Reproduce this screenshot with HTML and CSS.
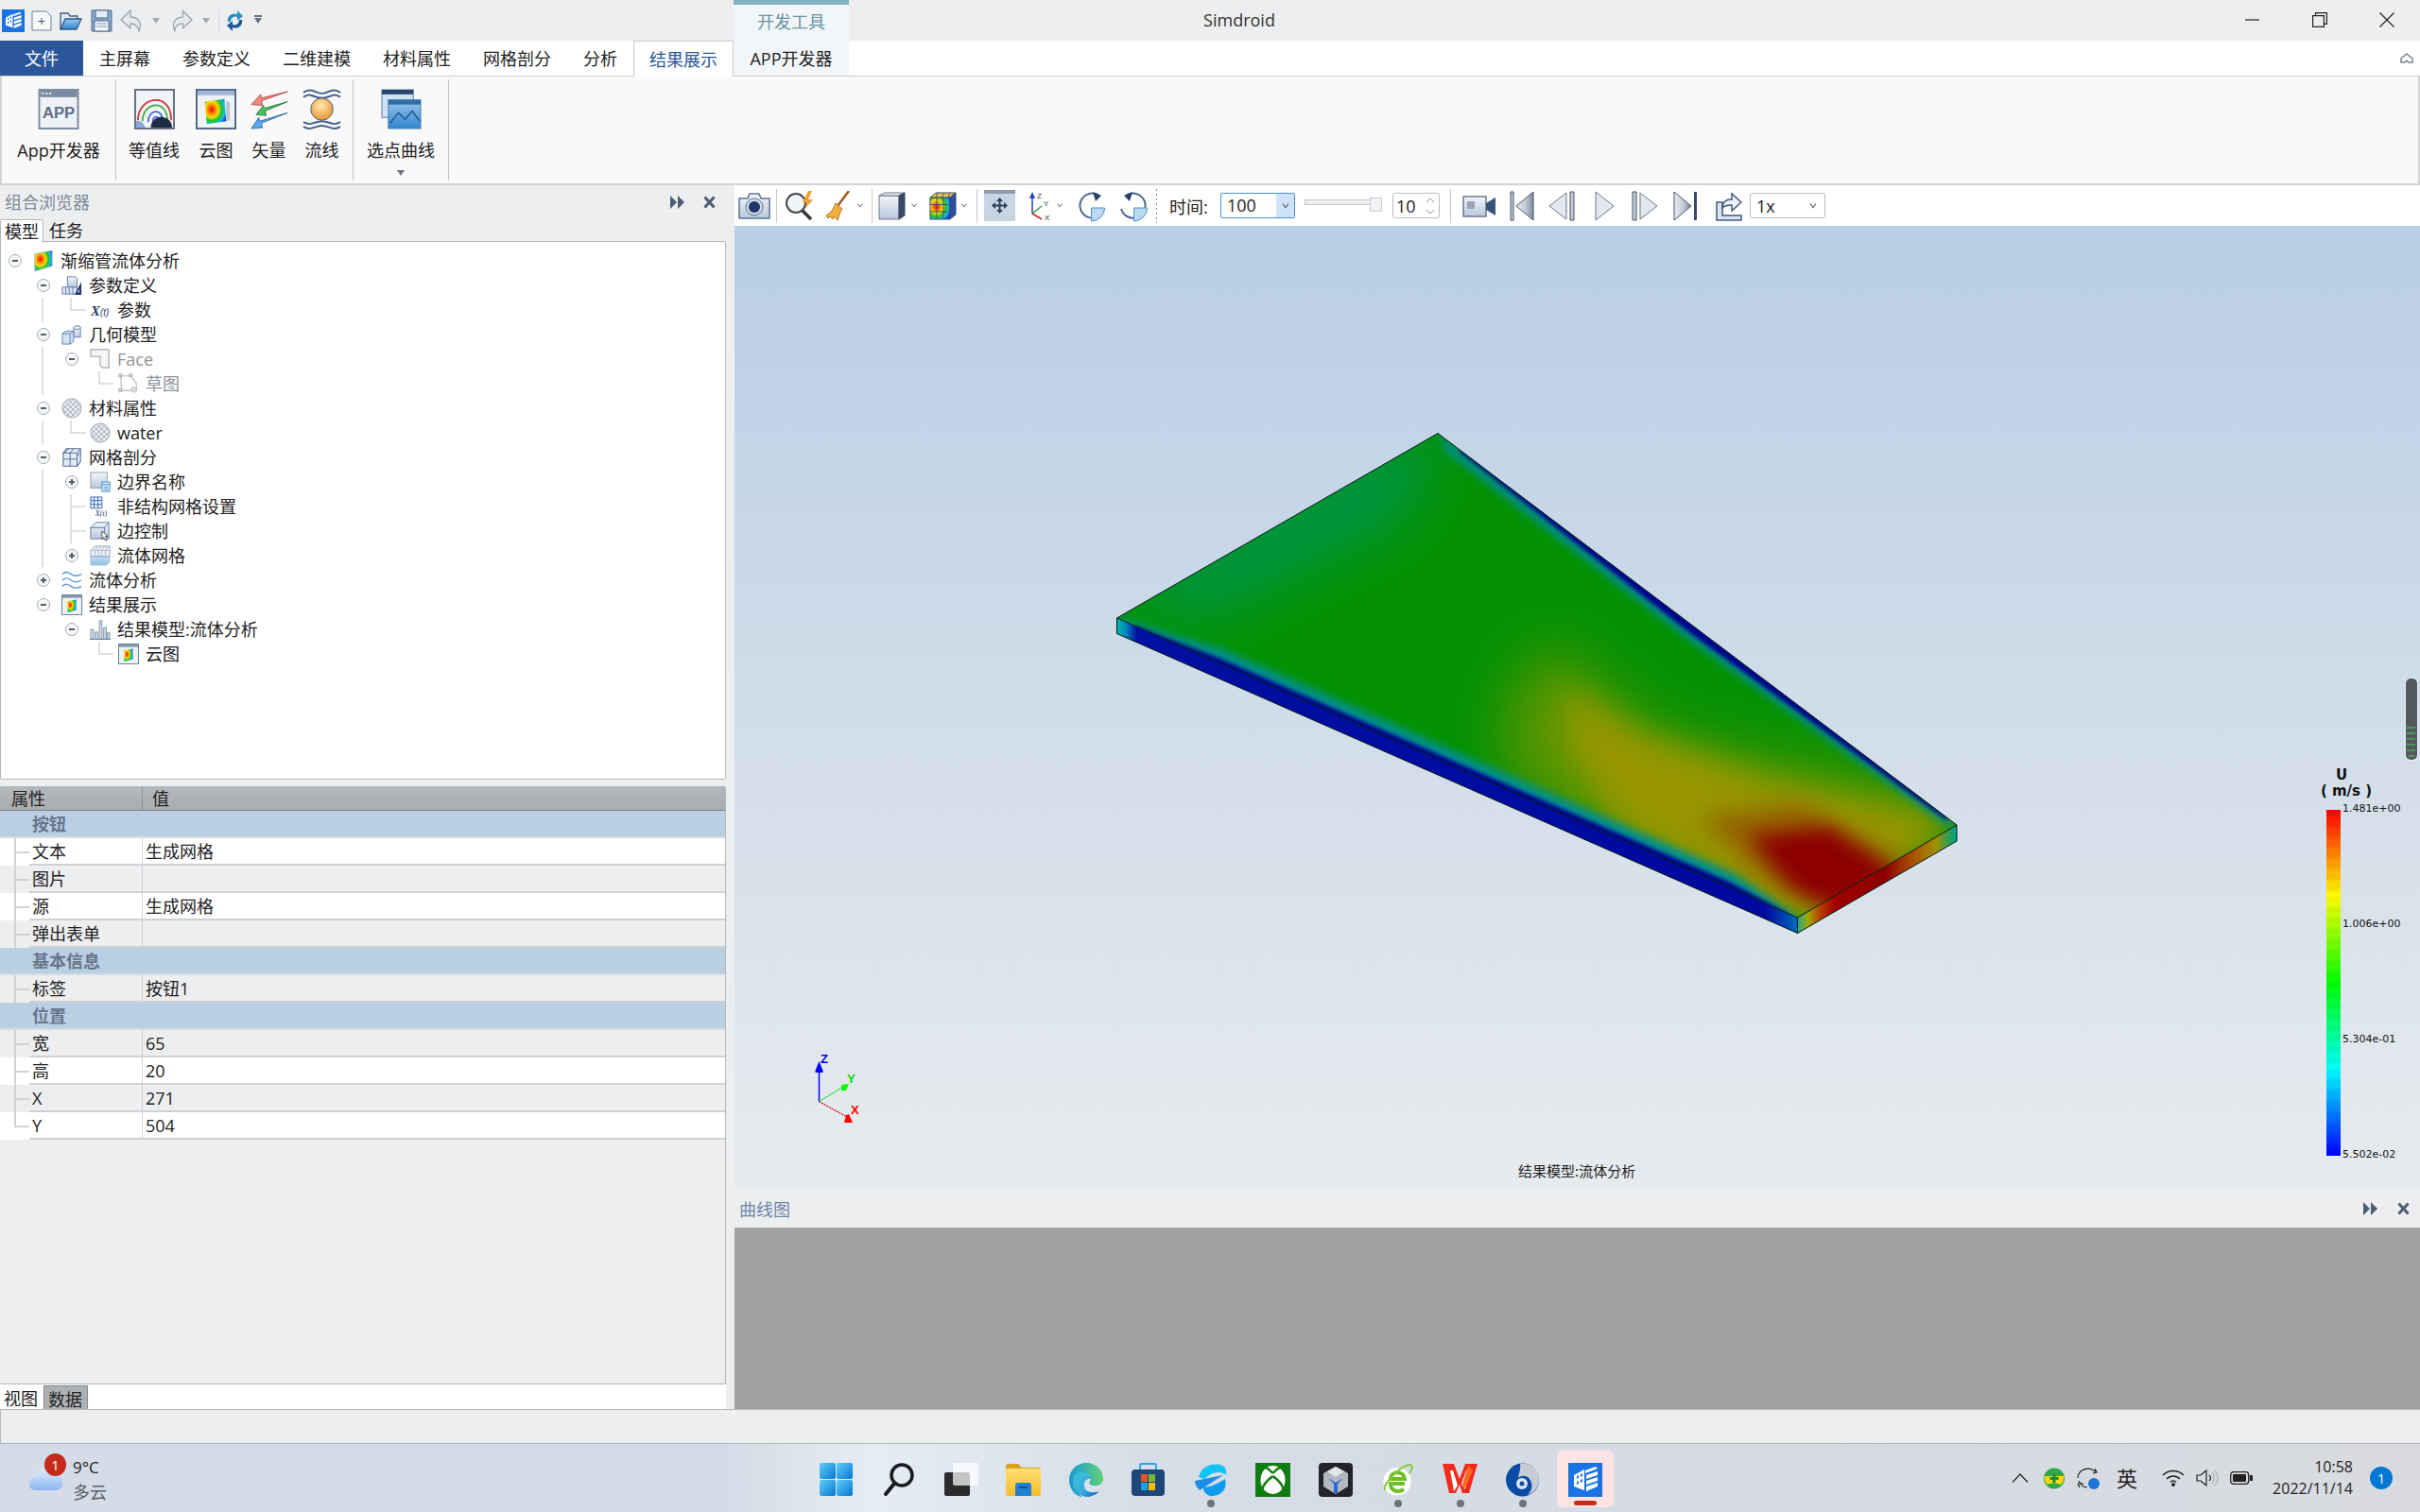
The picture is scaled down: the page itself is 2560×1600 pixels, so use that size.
FILE: index.html
```html
<!DOCTYPE html>
<html lang="zh-CN">
<head>
<meta charset="utf-8">
<title>Simdroid</title>
<link rel="stylesheet" href="styles.css">
</head>
<body>
<svg class="defs" width="0" height="0" aria-hidden="true">
  <defs>
    <radialGradient id="rb" cx=".32" cy=".42" r=".75"><stop offset="0" stop-color="#e01010"/><stop offset=".22" stop-color="#ff7a00"/><stop offset=".42" stop-color="#f2e000"/><stop offset=".62" stop-color="#20c030"/><stop offset=".82" stop-color="#10c0e0"/><stop offset="1" stop-color="#1040e0"/></radialGradient>
    <linearGradient id="gv" x1="0" y1="0" x2="0" y2="1"><stop offset="0" stop-color="#f2f5f9"/><stop offset="1" stop-color="#b9c8dc"/></linearGradient>
    <linearGradient id="gm" x1="0" y1="0" x2="1" y2="0"><stop offset="0" stop-color="#e8ecf2"/><stop offset=".55" stop-color="#c3cad4"/><stop offset="1" stop-color="#7f8a99"/></linearGradient>
    <linearGradient id="gb" x1="0" y1="0" x2="0" y2="1"><stop offset="0" stop-color="#9cc8ee"/><stop offset="1" stop-color="#2e86cf"/></linearGradient>
    <linearGradient id="gw" x1="0" y1="0" x2="1" y2="1"><stop offset="0" stop-color="#5ed0fa"/><stop offset="1" stop-color="#0676d0"/></linearGradient>
    <radialGradient id="gs" cx=".45" cy=".35" r=".7"><stop offset="0" stop-color="#ffe9b0"/><stop offset="1" stop-color="#e8902a"/></radialGradient>
    <linearGradient id="ge" x1="0" y1="0" x2="1" y2="1"><stop offset="0" stop-color="#38c6d8"/><stop offset=".6" stop-color="#3aa8e0"/><stop offset="1" stop-color="#0c5ab0"/></linearGradient>
    <linearGradient id="ge2" x1="0" y1="0" x2="1" y2="0"><stop offset="0" stop-color="#1a9ad0"/><stop offset="1" stop-color="#62d07a"/></linearGradient>
    <linearGradient id="gc" x1="0" y1="0" x2="0" y2="1"><stop offset="0" stop-color="#e0ecfb"/><stop offset="1" stop-color="#8db6ef"/></linearGradient>
    <linearGradient id="gf" x1="0" y1="0" x2="0" y2="1"><stop offset="0" stop-color="#ffdf70"/><stop offset="1" stop-color="#f6bd2c"/></linearGradient>
    <pattern id="chk" width="6" height="6" patternUnits="userSpaceOnUse"><rect width="6" height="6" fill="#f0f2f5"/><rect width="3" height="3" fill="#b4bbc6"/><rect x="3" y="3" width="3" height="3" fill="#b4bbc6"/></pattern>

    <symbol id="logo" viewBox="0 0 36 36"><rect width="36" height="36" fill="#1973e3"/><path d="M6 13 17 7v22L6 25z" fill="#fff"/><path d="M9 14l2-1v3l-2 1zM13 12l2-1v3l-2 1zM9 20l2-1v3l-2 1zM13 18l2-1v3l-2 1z" fill="#1973e3"/><path d="M18 8 29 4l2 2-13 5zM19 13l12-4v4l-12 4zM19 19l12-4v4l-12 4zM19 25l12-4v4l-12 5z" fill="#fff"/></symbol>
    <symbol id="v" viewBox="0 0 6 5"><path d="M.5.5 3 4 5.500.5" fill="none" stroke="#5b6b80"/></symbol>

    <symbol id="t-root" viewBox="0 0 24 24"><path d="M2 4 22 0v18L2 24z" fill="url(#rb)" stroke="#a8bbd0"/></symbol>
    <symbol id="t-param" viewBox="0 0 24 24"><path d="M7 2h9l2 2v10H7z" fill="url(#gv)" stroke="#5a7aa8"/><path d="M1 14h17v8H1z" fill="#dbe6f3" stroke="#5a7aa8"/><path d="M5 14v8M9 14v8M13 14v8" stroke="#5a7aa8"/><path d="M23 8v15h-8z" fill="#1f3a70"/><path d="M20.500 16v4h-2z" fill="#fff"/></symbol>
    <symbol id="t-geo" viewBox="0 0 24 24"><path d="M14 4v11h8V4z" fill="url(#gv)" stroke="#5a7aa8"/><ellipse cx="18" cy="4" rx="4" ry="2" fill="#eef3f9" stroke="#5a7aa8"/><path d="M1 11 5 8h9v12l-4 3H1z" fill="#d4e2f3" stroke="#5a7aa8"/><path d="M1 11h9v12M10 11l4-3" fill="none" stroke="#5a7aa8"/></symbol>
    <symbol id="t-face" viewBox="0 0 24 24"><path d="M1 1h21v21h-7l-3-3V9H1z" fill="#f6f6f6" stroke="#a8a8a8" stroke-width="1.300"/></symbol>
    <symbol id="t-sketch" viewBox="0 0 24 24"><path d="M3 3h12l6 9v8H4z" fill="none" stroke="#bbb" stroke-width="1.300"/><g fill="#ddd" stroke="#aaa"><rect x="1" y="1" width="3" height="3"/><rect x="13" y="1" width="3" height="3"/><rect x="1" y="18" width="3" height="3"/></g><circle cx="18" cy="19" r="3" fill="#ddd" stroke="#aaa" stroke-dasharray="1.500 1"/></symbol>
    <symbol id="t-mat" viewBox="0 0 24 24"><circle cx="12" cy="12" r="11" fill="url(#chk)" stroke="#9aa6b6"/></symbol>
    <symbol id="t-mesh" viewBox="0 0 24 24"><path d="M2 7 6 2h16v15l-4 5H2z" fill="#e4ebf4" stroke="#4d6a92" stroke-width="1.100"/><path d="M2 7h16v15M18 7l4-5M2 14h16M10 7v15M8 2 4 7M14 2l-4 5M18 11l4-5" fill="none" stroke="#4d6a92"/></symbol>
    <symbol id="t-bound" viewBox="0 0 24 24"><rect x="1" y="1" width="19" height="18" fill="url(#gv)" stroke="#8b9bb0"/><rect x="14" y="12" width="9" height="11" fill="#dceaf8" stroke="#3f8ac8"/><path d="M14 15h9M16 18h5M16 20.500h5" stroke="#3f8ac8"/></symbol>
    <symbol id="t-grid" viewBox="0 0 24 24"><path d="M1 1h13v13H1zM5 1v13M9.500 1v13M1 5h13M1 9.500h13" fill="#e6eefb" stroke="#3a66b0"/><text x="6" y="23" class="xt-s">X(t)</text></symbol>
    <symbol id="t-edge" viewBox="0 0 24 24"><path d="M1 8l6-6h15v19H1z" fill="url(#gv)" stroke="#5a7aa8"/><path d="M1 8h16v13M17 8l5-6" fill="none" stroke="#5a7aa8"/><path d="M14 12v9l2-2 2 4 2-1-2-4h3z" fill="#fff" stroke="#444"/></symbol>
    <symbol id="t-fmesh" viewBox="0 0 24 24"><path d="M6 1h17v12H1V6z" fill="#eef2f8" stroke="#8aa0be"/><path d="M9 1 6 6M13 1l-3 5M17 1l-3 5M21 1l-3 5M1 6h22M6 6v7M10 6v7M14 6v7M18 6v7" stroke="#a8b8cc" fill="none"/><path d="M1 13h22v6l-4 4H1z" fill="url(#gb)" opacity=".55" stroke="#6e8cb4"/></symbol>
    <symbol id="t-wave" viewBox="0 0 24 24"><path d="M1 5c4-4 7-2 10 0s7 3 12 0M1 12c4-4 7-2 10 0s7 3 12 0M1 19c4-4 7-2 10 0s7 3 12 0" fill="none" stroke="#5d9ad6" stroke-width="1.500"/></symbol>
    <symbol id="t-result" viewBox="0 0 24 24"><rect x=".5" y=".5" width="23" height="23" fill="#eef1f5" stroke="#66788f"/><path d="M1 1h22v3H1z" fill="#8898ad"/><path d="M7 8l10-2v12l-10 3z" fill="url(#rb)"/></symbol>
    <symbol id="t-chart" viewBox="0 0 24 24"><path d="M1 23V12h3v11zM6 23V15h3v8zM11 23V2h3v21zM16 23V10h3v13zM20 23V16h3v7z" fill="#d6e0ec" stroke="#7c8da3"/><path d="M0 23.500h24" stroke="#5a7aa8"/></symbol>

    <symbol id="r-app" viewBox="0 0 44 44"><rect x="1" y="1" width="42" height="42" fill="#eef1f5" stroke="#7a8aa0" stroke-width="2"/><rect x="2" y="2" width="40" height="7" fill="#7a8aa0"/><path d="M4 5h2M8 5h2M12 5h2" stroke="#fff" stroke-width="2"/><text x="22" y="32" class="app-t">APP</text></symbol>
    <symbol id="r-contour" viewBox="0 0 44 44"><rect x="1" y="1" width="42" height="42" fill="#f0f3f7" stroke="#66707e" stroke-width="2"/><g fill="none" stroke-width="1.800"><path d="M4 34C4 8 40 2 40 34" stroke="#d83030"/><path d="M9 35C9 14 36 10 36 35" stroke="#3db040"/><path d="M15 36c0-14 16-16 16 0" stroke="#3a6fd0"/><path d="M20 37c0-8 7-10 7 0" stroke="#5a5ad8"/></g><path d="M18 42c0-8 8-13 14-11 5 1 9 5 9 11z" fill="#1f2b46"/><path d="M2 35c4-2 8 2 10 7H2z" fill="#8aa8da"/></symbol>
    <symbol id="r-cloud" viewBox="0 0 44 44"><rect x="1" y="1" width="42" height="42" fill="#eef1f5" stroke="#506786" stroke-width="2"/><rect x="2" y="2" width="40" height="5" fill="#9fb7d4"/><path d="M10 14 31 11 33 35 12 38z" fill="url(#rb)"/><path d="M33 13 37 15 37 34 33 35z" fill="#bcc3cc"/></symbol>
    <symbol id="r-vector" viewBox="0 0 44 44"><path d="M42 3 14 13l1 5-12-1 10-11 1 4z" fill="#f08a80" stroke="#b03838" stroke-width=".8"/><path d="M42 14 18 24l1 5-11-1 8-10 1 3z" fill="#48c060" stroke="#20663a" stroke-width=".8"/><path d="M42 26 14 37l1 5-12 1 8-12 1 4z" fill="#5ea8ee" stroke="#1c5a9c" stroke-width=".8"/></symbol>
    <symbol id="r-stream" viewBox="0 0 44 44"><g fill="none" stroke="#44608c" stroke-width="2"><path d="M2 4c8-6 14 1 20 1s12-7 20-1"/><path d="M2 9c8-6 10 1 20 1s12-7 20-1"/><path d="M2 36c8 5 12-1 20-1s12 6 20 1"/><path d="M2 41c8 5 12-1 20-1s12 6 20 1"/></g><ellipse cx="22" cy="22" rx="12" ry="12" fill="url(#gs)" stroke="#4c5f7c"/></symbol>
    <symbol id="r-pick" viewBox="0 0 44 44"><rect x="1" y="1" width="34" height="30" fill="#cfe3f5" stroke="#5a7aa0"/><rect x="1" y="1" width="34" height="5" fill="#2b4470"/><rect x="8" y="12" width="35" height="31" fill="url(#gb)" stroke="#4a7cb0"/><rect x="8" y="12" width="35" height="5" fill="#2f6ea6"/><path d="M10 37l9-11 7 7 8-9 8 11" fill="none" stroke="#1f5790" stroke-width="1.500"/></symbol>

    <symbol id="b-cam" viewBox="0 0 34 29"><path d="M1 7h9l2-5h10l2 5h9v21H1z" fill="url(#gv)" stroke="#5d7494" stroke-width="1.500"/><circle cx="17" cy="16" r="9" fill="#cbd8e8" stroke="#5d7494"/><circle cx="17" cy="16" r="6" fill="#1f3468"/></symbol>
    <symbol id="b-mag" viewBox="0 0 35 32"><circle cx="13" cy="13" r="10" fill="#f1f4f7" stroke="#44494f" stroke-width="2"/><path d="M20 21l9 9" stroke="#33383f" stroke-width="3.500"/><path d="M26 0 20 12h5l-3 8 9-11h-5l4-9z" fill="#f0a030"/></symbol>
    <symbol id="b-broom" viewBox="0 0 26 32"><path d="M25 0 13 16" stroke="#9a5a20" stroke-width="2.500"/><path d="M11 13l7 6-2 3-3 9-4-4-1 3-3-3-2 2-2-3c5-3 8-7 10-13z" fill="#f0b040" stroke="#b5741c"/></symbol>
    <symbol id="b-cube" viewBox="0 0 29 30"><path d="M1 4h21v25H1z" fill="url(#gv)" stroke="#6b7686"/><path d="M1 4l6-3h21l-6 3z" fill="#e8edf3" stroke="#6b7686"/><path d="M22 4l6-3v24l-6 4z" fill="#3a4a66" stroke="#3a4a66"/></symbol>
    <symbol id="b-color" viewBox="0 0 29 30"><path d="M1 6h21v23H1z" fill="url(#rb)" stroke="#3c4a60"/><path d="M1 6l6-5h21l-6 5z" fill="#e4c060" stroke="#3c4a60"/><path d="M22 6l6-5v23l-6 5z" fill="#2a4fa8" stroke="#3c4a60"/><path d="M8 6v23M15 6v23M1 13.500h21M1 21h21M9 1l-2 5M16 1l-3 5M22 1l-2 5" stroke="#46536a" fill="none"/></symbol>
    <symbol id="b-move" viewBox="0 0 33 33"><rect width="33" height="33" fill="#c7d4e4"/><rect width="33" height="4" fill="#8c9cb2"/><path d="M16.500 8 13 12h2.500v3.500H12V13l-4 3.500 4 3.500v-2.500h3.500V21H13l3.500 4 3.500-4h-2.500v-3.500H21V20l4-3.500-4-3.500v2.500h-3.500V12H20z" fill="#2d3f5c"/></symbol>
    <symbol id="b-axes" viewBox="0 0 29 32"><path d="M5 24V6" stroke="#2040c0" stroke-width="1.500"/><path d="M5 1 2 8h6z" fill="#2040c0"/><path d="M5 24l10-8" stroke="#20a040" stroke-width="1.500"/><path d="M5 24l10 6" stroke="#d02020" stroke-width="1.500"/><text x="10" y="8" class="ax-t">Z</text><text x="17" y="16" class="ax-t">Y</text><text x="18" y="31" class="ax-t">X</text></symbol>
    <symbol id="b-rot1" viewBox="0 0 31 34"><path d="M24 6A13 13 0 1 0 29 20" fill="none" stroke="#4e6a8e" stroke-width="2"/><path d="M17 2l9 4-6 6z" fill="#2a3f66"/><path d="M15.500 19v14A14 14 0 0 0 29.500 19z" fill="#bcd8f2" stroke="#4e90d0"/></symbol>
    <symbol id="b-rot2" viewBox="0 0 31 34"><path d="M7 6A13 13 0 1 1 2 20" fill="none" stroke="#4e6a8e" stroke-width="2"/><path d="M14 2 5 6l6 6z" fill="#2a3f66"/><path d="M15.500 19v14A14 14 0 0 0 29.500 19z" fill="#bcd8f2" stroke="#4e90d0"/></symbol>
    <symbol id="b-video" viewBox="0 0 36 26"><rect x="1" y="3" width="24" height="21" fill="url(#gv)" stroke="#6b7a8e" stroke-width="1.500"/><rect x="5" y="8" width="8" height="8" fill="#9aa4b2"/><path d="M25 10l10-6v19l-10-6z" fill="#3a557c"/></symbol>
    <symbol id="b-first" viewBox="0 0 26 32"><path d="M1 1h3v30H1z" fill="#c4ccd6" stroke="#44526a"/><path d="M25 1v30L7 16z" fill="url(#gm)" stroke="#44526a"/></symbol>
    <symbol id="b-prev" viewBox="0 0 28 32"><path d="M19 2v28L1 16z" fill="#e4e8ee" stroke="#6a778c"/><path d="M23 1h4v30h-4z" fill="#c4ccd6" stroke="#44526a"/></symbol>
    <symbol id="b-play" viewBox="0 0 21 32"><path d="M1 1v30l19-15z" fill="#e4e8ee" stroke="#6a778c"/></symbol>
    <symbol id="b-next" viewBox="0 0 28 32"><path d="M1 1h4v30H1z" fill="#c4ccd6" stroke="#44526a"/><path d="M9 2v28l18-14z" fill="#e4e8ee" stroke="#6a778c"/></symbol>
    <symbol id="b-last" viewBox="0 0 26 32"><path d="M1 1v30l18-15z" fill="url(#gm)" stroke="#44526a"/><path d="M22 1h3v30h-3z" fill="#3a4a62"/></symbol>
    <symbol id="b-export" viewBox="0 0 28 32"><path d="M1 12h6v14h20v5H1z" fill="#dce6f2" stroke="#41587a" stroke-width="1.500"/><path d="M7 18c0-6 4-9 10-9V3l10 9-10 9v-6c-5 0-8 1-10 3z" fill="#eef3f9" stroke="#41587a" stroke-width="1.500"/></symbol>

    <symbol id="q-doc" viewBox="0 0 22 22"><path d="M1 1h15l5 5v15H1z" fill="#f8f9fb" stroke="#6f8098"/><path d="M11 8v7M7.500 11.500h7" stroke="#44526a"/></symbol>
    <symbol id="q-open" viewBox="0 0 24 22"><path d="M1 20V3h8l2 3h8v4" fill="#dfe8f2" stroke="#3b5d85" stroke-width="1.300"/><path d="M1 20 6 9h17l-5 11z" fill="url(#gb)" stroke="#2f5984" stroke-width="1.300"/></symbol>
    <symbol id="q-save" viewBox="0 0 23 24"><path d="M1 1h21v22H1z" fill="#8ca8c8" stroke="#4d6a8e"/><rect x="5" y="1" width="13" height="8" fill="#e4ecf4" stroke="#4d6a8e"/><rect x="4" y="12" width="15" height="11" fill="#f3f6fa" stroke="#4d6a8e"/><path d="M6 15h11M6 18h11" stroke="#7c92ad"/></symbol>
    <symbol id="q-undo" viewBox="0 0 25 24"><path d="M11 1 1 11l10 9v-5c5 0 8 2 9 8 4-9-1-15-9-15z" fill="#e6e8ec" stroke="#9aa2ad" stroke-width="1.300"/></symbol>
    <symbol id="q-redo" viewBox="0 0 25 24"><path d="M14 1l10 10-10 9v-5c-5 0-8 2-9 8-4-9 1-15 9-15z" fill="#e6e8ec" stroke="#9aa2ad" stroke-width="1.300"/></symbol>
    <symbol id="q-ref" viewBox="0 0 19 24"><path d="M2 13C1 7 6 3 12 5V1l6 6-6 5V8C8 7 5 9 5 13z" fill="#2a90c8"/><path d="M17 11c1 6-4 10-10 8v4l-6-6 6-5v4c4 1 7-1 7-5z" fill="#1d5a94"/></symbol>

    <symbol id="k-win" viewBox="0 0 35 35"><rect width="17" height="17" rx="2" fill="url(#gw)"/><rect x="18" width="17" height="17" rx="2" fill="url(#gw)"/><rect y="18" width="17" height="17" rx="2" fill="url(#gw)"/><rect x="18" y="18" width="17" height="17" rx="2" fill="url(#gw)"/></symbol>
    <symbol id="k-search" viewBox="0 0 34 35"><circle cx="20" cy="13" r="11" fill="none" stroke="#1b1b1f" stroke-width="3.500"/><path d="M12 22 3 33" stroke="#1b1b1f" stroke-width="4" stroke-linecap="round"/></symbol>
    <symbol id="k-task" viewBox="0 0 36 35"><rect y="10" width="27" height="25" rx="2" fill="#2b2b2e"/><rect x="9" width="27" height="24" rx="2" fill="#fff" fill-opacity=".72"/></symbol>
    <symbol id="k-folder" viewBox="0 0 37 35"><path d="M0 4q0-3 3-3h10l4 4h17q3 0 3 3v6H0z" fill="#d9a11e"/><rect y="6" width="37" height="29" rx="2" fill="url(#gf)"/><path d="M10 35V24q0-3 3-3h11q3 0 3 3v11z" fill="#1f7fd0"/><path d="M14 26h9" stroke="#0f4f90" stroke-width="2"/></symbol>
    <symbol id="k-edge" viewBox="0 0 36 36"><path d="M18 0c11 0 18 8 18 17 0 6-6 8-11 7-4-1-5-4-2-6-3-4-9-5-13-1-4 5-3 14 4 19C7 36 0 28 0 18 0 8 8 0 18 0z" fill="url(#ge2)"/><path d="M5 14c5-7 15-6 18 2-4 1-8 3-7 9 1 5 7 8 16 5-4 4-9 6-14 6C6 34 2 23 5 14z" fill="url(#ge)"/></symbol>
    <symbol id="k-store" viewBox="0 0 35 35"><path d="M9 7V3q0-2 2-2h13q2 0 2 2v4" fill="none" stroke="#2fa4e8" stroke-width="2"/><rect y="7" width="35" height="28" rx="4" fill="#1d4679"/><rect x="10" y="12" width="7" height="8" fill="#e8532a"/><rect x="18" y="12" width="7" height="8" fill="#7db72f"/><rect x="10" y="21" width="7" height="8" fill="#1ba1e2"/><rect x="18" y="21" width="7" height="8" fill="#fdb900"/></symbol>
    <symbol id="k-blue" viewBox="0 0 34 36"><path d="M4 15C6 5 16 0 27 2c6 2 7 6 6 11-4-4-12-4-18 0l-5 4z" fill="#12c5f5"/><path d="M30 13 5 29c-3-3-5-6-5-10z" fill="#0a84e8" opacity=".9"/><path d="M8 25c7 2 16-3 24-8 2 8-1 14-8 17-8 3-14 0-16-9z" fill="#0e9cf0"/></symbol>
    <symbol id="k-xbox" viewBox="0 0 37 36"><rect width="37" height="36" fill="#107c10"/><ellipse cx="18.500" cy="18" rx="13" ry="15" fill="#fff"/><path d="M18.500 11C14 6 10 3 7 5M18.500 11C23 6 27 3 30 5M18.500 14C10 20 5 28 8 33M18.500 14C27 20 32 28 29 33" fill="none" stroke="#107c10" stroke-width="2.500"/></symbol>
    <symbol id="k-cube" viewBox="0 0 36 36"><rect width="36" height="36" rx="4" fill="#232427"/><path d="M18 4 31 11v14l-13 8-13-8V11z" fill="#b4b8be"/><path d="M18 4l9 5-9 6-9-6z" fill="#e2e4e7"/><path d="M10 16l8 5 8-5-6 6v10h-4V22z" fill="#2a66d8"/></symbol>
    <symbol id="k-ie" viewBox="0 0 33 36"><circle cx="16" cy="20" r="15" fill="#fff" stroke="#e0e6dc"/><path d="M24 22H9c0 8 8 10 14 6M9 17c0-9 14-9 15 0z" fill="none" stroke="#6ebf2a" stroke-width="4"/><path d="M3 29C0 22 22 1 30 2c3 1 2 5-1 9" fill="none" stroke="#84c83a" stroke-width="2"/></symbol>
    <symbol id="k-wps" viewBox="0 0 37 32"><path d="M0 1h12l6 16 6-16h13l-9 31h-7l-3-9-4 9H7z" fill="#f22b1c"/><path d="M8 8h3l5 16-4 6zM28 8h-3l-5 14 4 6z" fill="#fff"/><path d="M27 3l5 5-8 19-3-4z" fill="#ff6a1e"/></symbol>
    <symbol id="k-swirl" viewBox="0 0 35 36"><circle cx="17.500" cy="18" r="17.500" fill="#0b4ba8"/><path d="M15 1c11-2 20 6 20 16 0 9-6 15-12 17 5-5 6-12 2-17-3-4-9-4-12-1 1-6 3-10 2-15z" fill="#c7ccd2"/><circle cx="17" cy="22" r="6" fill="#dfe4ea"/><circle cx="17" cy="22" r="2.500" fill="#0b4ba8"/></symbol>

    <symbol id="y-shield" viewBox="0 0 22 23"><circle cx="11" cy="11.500" r="11" fill="#2fa84a"/><path d="M1 9h20c1 5-2 9-4 9-4-2-9-2-13 0C2 16 0 13 1 9z" fill="#f3d80d"/><path d="M11 7v9M6.500 11.500h9" stroke="#1c8a38" stroke-width="3"/></symbol>
    <symbol id="y-sync" viewBox="0 0 24 24"><path d="M1 12C1 5 9 0 16 3l5 3M19 2l2 4-4 1M1 18h6M1 18l2 4" fill="none" stroke="#222" stroke-width="1.200"/><path d="M2 15c3 6 7 7 9 7" fill="none" stroke="#222" stroke-width="1.200"/><circle cx="18" cy="18" r="6" fill="#1d74d8"/></symbol>
    <symbol id="y-wifi" viewBox="0 0 24 18"><path d="M1 6c6-6 16-6 22 0M5 10c4-4 10-4 14 0M9 13.500c2-2 4-2 6 0" fill="none" stroke="#222" stroke-width="1.500"/><circle cx="12" cy="16" r="2" fill="#222"/></symbol>
    <symbol id="y-sound" viewBox="0 0 24 18"><path d="M1 6h4l6-5v16l-6-5H1z" fill="none" stroke="#222" stroke-width="1.200"/><path d="M14 6c2 2 2 4 0 6" fill="none" stroke="#222" stroke-width="1.200"/><path d="M17 3c3 4 3 8 0 12M20 1c4 5 4 11 0 16" fill="none" stroke="#a8abb0" stroke-width="1.200"/></symbol>
    <symbol id="y-batt" viewBox="0 0 24 14"><rect x=".7" y=".7" width="19" height="12.600" rx="3" fill="none" stroke="#222" stroke-width="1.300"/><rect x="3" y="3" width="14" height="8" rx="1" fill="#222"/><rect x="21" y="4" width="3" height="6" fill="#222"/></symbol>
  </defs>
</svg>

<div class="app">
  <header class="titlebar">
    <div class="qat">
      <svg class="ml2" width="24" height="24"><use href="#logo"/></svg>
      <svg class="ml7" width="22" height="22"><use href="#q-doc"/></svg>
      <svg class="ml8" width="24" height="22"><use href="#q-open"/></svg>
      <svg class="ml9" width="23" height="24"><use href="#q-save"/></svg>
      <svg class="ml8" width="25" height="24"><use href="#q-undo"/></svg>
      <i class="dd ml9"></i>
      <svg class="ml11" width="24" height="24"><use href="#q-redo"/></svg>
      <i class="dd ml10"></i>
      <i class="qsep ml9"></i>
      <svg class="ml7" width="19" height="24"><use href="#q-ref"/></svg>
      <i class="dd dd-line ml11"></i>
    </div>
    <div class="ctx">开发工具</div>
    <div class="wintitle">Simdroid</div>
    <div class="winbtns">
      <svg width="16" height="16" viewBox="0 0 16 16"><path d="M0 8h15" stroke="#222" stroke-width="1.200"/></svg>
      <svg width="16" height="16" viewBox="0 0 16 16"><path d="M.6 3.600h11.800v11.800H.6z" fill="none" stroke="#222" stroke-width="1.200"/><path d="M3.500 3V.6h11.900v11.800H13" fill="none" stroke="#222" stroke-width="1.200"/></svg>
      <svg width="16" height="16" viewBox="0 0 16 16"><path d="M.5.500l15 15M15.500.500l-15 15" stroke="#222" stroke-width="1.200"/></svg>
    </div>
  </header>

  <nav class="menubar">
    <div class="filetab">文件</div>
    <div class="tab">主屏幕</div>
    <div class="tab">参数定义</div>
    <div class="tab">二维建模</div>
    <div class="tab">材料属性</div>
    <div class="tab">网格剖分</div>
    <div class="tab">分析</div>
    <div class="tab active">结果展示</div>
    <div class="tab devtab">APP开发器</div>
    <svg class="collapse" width="14" height="11" viewBox="0 0 14 11"><path d="M1 6 7 1l6 5v4H9L7 8 5 10H1z" fill="#fff" stroke="#7a838f" stroke-width="1.500"/></svg>
  </nav>

  <section class="ribbon">
    <div class="rg rg1">
      <div class="rbtn"><svg width="44" height="43"><use href="#r-app"/></svg><span>App开发器</span></div>
    </div>
    <div class="rg rg2">
      <div class="rbtn rb-w54"><svg width="45" height="43"><use href="#r-contour"/></svg><span>等值线</span></div>
      <div class="rbtn rb-w43 ml17"><svg width="43" height="43"><use href="#r-cloud"/></svg><span>云图</span></div>
      <div class="rbtn rb-w43 ml13"><svg width="43" height="43"><use href="#r-vector"/></svg><span>矢量</span></div>
      <div class="rbtn rb-w45 ml12"><svg width="45" height="43"><use href="#r-stream"/></svg><span>流线</span></div>
    </div>
    <div class="rg rg3">
      <div class="rbtn"><svg width="43" height="43"><use href="#r-pick"/></svg><span>选点曲线</span><i class="dd dd-rb"></i></div>
    </div>
  </section>

  <main class="main">
    <aside class="left">
      <div class="dockhead">
        <span class="docktitle lefttitle">组合浏览器</span>
        <span class="dockctl">
          <svg width="15" height="16" viewBox="0 0 15 16"><path d="M0 1l7 7-7 7zM8 1l7 7-7 7z" fill="#4d5d72"/></svg>
          <svg width="13" height="14" viewBox="0 0 13 14"><path d="M1.500 1.500l10 11M11.500 1.500l-10 11" stroke="#4d5d72" stroke-width="3"/></svg>
        </span>
      </div>
      <div class="subtabs"><span class="st on">模型</span><span class="st">任务</span></div>

      <div class="tree">
        <svg class="guides" width="767" height="570" viewBox="0 255 767 570"><path d="M45 315v26M75 315v13h16M45 367v51M105 393v13h15M45 445v25M75 445v13h16M45 497v103M75 523v52M75 536h16M75 562h16M105 679v13h15" fill="none" stroke="#d3d6da" stroke-width="1.500"/></svg>
        <div class="row l0"><i class="exp minus"></i><svg width="22" height="22"><use href="#t-root"/></svg><span>渐缩管流体分析</span></div>
        <div class="row l1"><i class="exp minus"></i><svg width="22" height="22"><use href="#t-param"/></svg><span>参数定义</span></div>
        <div class="row l2"><i class="exp none"></i><svg width="22" height="22" viewBox="0 0 22 22"><text x="1" y="17" class="xt">X<tspan class="xt-p">(t)</tspan></text></svg><span>参数</span></div>
        <div class="row l1"><i class="exp minus"></i><svg width="22" height="22"><use href="#t-geo"/></svg><span>几何模型</span></div>
        <div class="row l2 dim"><i class="exp minus"></i><svg width="22" height="22"><use href="#t-face"/></svg><span>Face</span></div>
        <div class="row l3 dim"><i class="exp none"></i><svg width="22" height="22"><use href="#t-sketch"/></svg><span>草图</span></div>
        <div class="row l1"><i class="exp minus"></i><svg width="22" height="22"><use href="#t-mat"/></svg><span>材料属性</span></div>
        <div class="row l2"><i class="exp none"></i><svg width="22" height="22"><use href="#t-mat"/></svg><span>water</span></div>
        <div class="row l1"><i class="exp minus"></i><svg width="22" height="22"><use href="#t-mesh"/></svg><span>网格剖分</span></div>
        <div class="row l2"><i class="exp plus"></i><svg width="22" height="22"><use href="#t-bound"/></svg><span>边界名称</span></div>
        <div class="row l2"><i class="exp none"></i><svg width="22" height="22"><use href="#t-grid"/></svg><span>非结构网格设置</span></div>
        <div class="row l2"><i class="exp none"></i><svg width="22" height="22"><use href="#t-edge"/></svg><span>边控制</span></div>
        <div class="row l2"><i class="exp plus"></i><svg width="22" height="22"><use href="#t-fmesh"/></svg><span>流体网格</span></div>
        <div class="row l1"><i class="exp plus"></i><svg width="22" height="22"><use href="#t-wave"/></svg><span>流体分析</span></div>
        <div class="row l1"><i class="exp minus"></i><svg width="22" height="22"><use href="#t-result"/></svg><span>结果展示</span></div>
        <div class="row l2"><i class="exp minus"></i><svg width="22" height="22"><use href="#t-chart"/></svg><span>结果模型:流体分析</span></div>
        <div class="row l3"><i class="exp none"></i><svg width="22" height="22"><use href="#t-result"/></svg><span>云图</span></div>
      </div>

      <div class="props">
        <div class="phead"><span class="ph-k">属性</span><span class="ph-v">值</span></div>
        <div class="pgroup">按钮</div>
        <div class="pr"><i class="pi"></i><span class="pk">文本</span><span class="pv">生成网格</span></div>
        <div class="pr alt"><i class="pi"></i><span class="pk">图片</span><span class="pv"></span></div>
        <div class="pr"><i class="pi"></i><span class="pk">源</span><span class="pv">生成网格</span></div>
        <div class="pr alt"><i class="pi"></i><span class="pk">弹出表单</span><span class="pv"></span></div>
        <div class="pgroup">基本信息</div>
        <div class="pr alt"><i class="pi"></i><span class="pk">标签</span><span class="pv">按钮1</span></div>
        <div class="pgroup">位置</div>
        <div class="pr alt"><i class="pi"></i><span class="pk">宽</span><span class="pv">65</span></div>
        <div class="pr"><i class="pi"></i><span class="pk">高</span><span class="pv">20</span></div>
        <div class="pr alt"><i class="pi"></i><span class="pk">X</span><span class="pv">271</span></div>
        <div class="pr"><i class="pi pi-end"></i><span class="pk">Y</span><span class="pv">504</span></div>
      </div>
      <div class="bottabs"><span class="bt">视图</span><span class="bt on">数据</span></div>
    </aside>

    <section class="right">
      <div class="toolbar">
        <svg class="ml4" width="34" height="29"><use href="#b-cam"/></svg>
        <i class="tsep ml6"></i>
        <svg class="ml7" width="35" height="32"><use href="#b-mag"/></svg>
        <svg class="ml9" width="26" height="32"><use href="#b-broom"/></svg>
        <svg class="ml8" width="6" height="5"><use href="#v"/></svg>
        <i class="tsep ml9"></i>
        <svg class="ml6" width="29" height="30"><use href="#b-cube"/></svg>
        <svg class="ml6" width="6" height="5"><use href="#v"/></svg>
        <svg class="ml13" width="29" height="30"><use href="#b-color"/></svg>
        <svg class="ml5" width="6" height="5"><use href="#v"/></svg>
        <i class="tsep ml10"></i>
        <svg class="ml7" width="33" height="33"><use href="#b-move"/></svg>
        <svg class="ml13" width="29" height="32"><use href="#b-axes"/></svg>
        <svg class="ml2" width="6" height="5"><use href="#v"/></svg>
        <svg class="ml15" width="31" height="34"><use href="#b-rot1"/></svg>
        <svg class="ml14" width="31" height="34"><use href="#b-rot2"/></svg>
        <i class="tdash ml8"></i>
        <span class="tlabel ml13">时间:</span>
        <div class="combo ml13"><span class="combo-val">100</span><span class="combo-btn"><svg width="8" height="6"><use href="#v"/></svg></span></div>
        <div class="slider ml10"><i class="thumb"></i></div>
        <div class="spin ml11"><span>10</span><svg width="10" height="20" viewBox="0 0 10 20"><path d="M1 6l4-4 4 4M1 14l4 4 4-4" fill="none" stroke="#8a94a2"/></svg></div>
        <i class="tsep ml11"></i>
        <svg class="ml12" width="36" height="26"><use href="#b-video"/></svg>
        <svg class="ml14" width="26" height="32"><use href="#b-first"/></svg>
        <svg class="ml15" width="28" height="32"><use href="#b-prev"/></svg>
        <svg class="ml21" width="21" height="32"><use href="#b-play"/></svg>
        <svg class="ml18" width="28" height="32"><use href="#b-next"/></svg>
        <svg class="ml16" width="26" height="32"><use href="#b-last"/></svg>
        <svg class="ml19" width="28" height="32"><use href="#b-export"/></svg>
        <div class="select ml8"><span>1x</span><svg width="8" height="6"><use href="#v"/></svg></div>
      </div>

      <div class="viewport">
        <svg class="scene" width="1783" height="1017" viewBox="777 239 1783 1017">
          <defs>
            <clipPath id="topclip"><polygon points="1521,458.500 1181.500,654 1901.500,971 2070,873"/></clipPath>
            <filter id="b2" filterUnits="userSpaceOnUse" x="1100" y="400" width="1050" height="650"><feGaussianBlur stdDeviation="2"/></filter>
            <filter id="b4" filterUnits="userSpaceOnUse" x="1100" y="400" width="1050" height="650"><feGaussianBlur stdDeviation="4"/></filter>
            <filter id="b10" filterUnits="userSpaceOnUse" x="1100" y="400" width="1050" height="650"><feGaussianBlur stdDeviation="10"/></filter>
            <filter id="b12" filterUnits="userSpaceOnUse" x="1100" y="400" width="1050" height="650"><feGaussianBlur stdDeviation="12"/></filter>
            <filter id="b16" filterUnits="userSpaceOnUse" x="1100" y="400" width="1050" height="650"><feGaussianBlur stdDeviation="16"/></filter>
            <filter id="b30" filterUnits="userSpaceOnUse" x="1100" y="400" width="1050" height="650"><feGaussianBlur stdDeviation="30"/></filter>
            <linearGradient id="sideL" gradientUnits="userSpaceOnUse" x1="1181" y1="0" x2="1902" y2="0"><stop offset="0" stop-color="#00b8a8"/><stop offset=".012" stop-color="#0090c0"/><stop offset=".03" stop-color="#0010a0"/><stop offset=".95" stop-color="#0008a0"/><stop offset=".98" stop-color="#0040b0"/><stop offset="1" stop-color="#0070b8"/></linearGradient>
            <linearGradient id="sideF" gradientUnits="userSpaceOnUse" x1="1901" y1="0" x2="2070" y2="0"><stop offset="0" stop-color="#20a890"/><stop offset=".07" stop-color="#a0a800"/><stop offset=".14" stop-color="#b84000"/><stop offset=".24" stop-color="#a00000"/><stop offset=".55" stop-color="#8c0000"/><stop offset=".72" stop-color="#a85000"/><stop offset=".87" stop-color="#a09000"/><stop offset=".96" stop-color="#20a060"/><stop offset="1" stop-color="#00a090"/></linearGradient>
            <linearGradient id="cbar" x1="0" y1="0" x2="0" y2="1"><stop offset="0" stop-color="#ff0000"/><stop offset=".25" stop-color="#ffff00"/><stop offset=".5" stop-color="#00ff00"/><stop offset=".75" stop-color="#00ffff"/><stop offset="1" stop-color="#0000ff"/></linearGradient>
            <pattern id="cband" width="15" height="11.400" patternUnits="userSpaceOnUse" y="857"><rect width="15" height="5.700" fill="#000" fill-opacity=".035"/></pattern>
          </defs>

          <polygon points="1181.500,654 1901.500,971 1901.500,987.500 1181.500,670.500" fill="url(#sideL)"/>
          <polygon points="1901.500,971 2070,873 2070,890 1901.500,987.500" fill="url(#sideF)"/>
          <g clip-path="url(#topclip)">
            <polygon points="1521,458.500 1181.500,654 1901.500,971 2070,873" fill="#039103"/>
            <polygon points="1521,440 1170,640 1280,650 1490,545" fill="#00944a" filter="url(#b30)"/>
            <polygon points="1640,680 1760,780 1900,810 2090,850 1905,995 1740,910 1600,830 1590,750" fill="#5e9500" filter="url(#b30)"/>
            <polygon points="1655,725 1730,775 1870,825 2070,870 1965,950 1900,975 1825,930 1715,875 1665,800" fill="#969600" filter="url(#b16)"/>
            <polygon points="1800,865 1905,850 2020,915 1945,970 1865,930" fill="#946000" filter="url(#b12)"/>
            <polygon points="1850,885 1935,875 2010,925 1945,965 1895,940" fill="#8c0000" filter="url(#b10)"/>
            <polygon points="1521,458.500 2070,873 2062,875 1780,672 1530,478" fill="#008c90" filter="url(#b4)"/>
            <polygon points="1545,476 2060,866 1790,669" fill="#00008e" filter="url(#b2)" stroke="#00008e" stroke-width="4"/>
            <polygon points="1181.500,654 1295,688 1835,925 1901.500,971 1901.500,985 1181.500,670" fill="#009090" filter="url(#b4)"/>
            <polygon points="1200,662 1291,697 1831,934 1890,966 1890,980 1200,680" fill="#00008e" filter="url(#b2)"/>
          </g>
          <path d="M1181.500 654 1521 458.500 2070 873 1901.500 971zM1181.500 654v16.500l720 317 168.500-97.500V873M1901.500 971v16.500" fill="none" stroke="#031818" stroke-width="1"/>

          <g>
            <path d="M866.500 1165.700V1135" stroke="#0000ff" stroke-width="1.500"/>
            <path d="M866.500 1123 862.500 1133v2h8v-2z" fill="#0000ff"/>
            <path d="M866.500 1165.700 892 1150" stroke="#00e000" stroke-width="1.200" stroke-dasharray="2 1"/>
            <path d="M890 1148l8-1-3 7h-5z" fill="#00ff00"/>
            <path d="M866.500 1165.700 896 1182" stroke="#e00000" stroke-width="1.200" stroke-dasharray="2 1"/>
            <path d="M895 1180l3-1 4 9h-9z" fill="#ff0000"/>
            <text x="868" y="1125" class="ax ax-z">Z</text>
            <text x="896" y="1146" class="ax ax-y">Y</text>
            <text x="900" y="1179" class="ax ax-x">X</text>
          </g>

          <rect x="2461" y="857" width="15" height="366" fill="url(#cbar)"/>
          <rect x="2461" y="857" width="15" height="366" fill="url(#cband)"/>
          <text x="2477" y="825" class="cb-u">U</text>
          <text x="2482" y="842" class="cb-u">( m/s )</text>
          <text x="2478" y="859" class="cb-l">1.481e+00</text>
          <text x="2478" y="981" class="cb-l">1.006e+00</text>
          <text x="2478" y="1103" class="cb-l">5.304e-01</text>
          <text x="2478" y="1225" class="cb-l">5.502e-02</text>
          <text x="1606" y="1245" class="vp-cap">结果模型:流体分析</text>

          <rect x="2544" y="717" width="14" height="88" rx="6" fill="#f2f5f8" fill-opacity=".7"/>
          <rect x="2545" y="718" width="12" height="86" rx="5" fill="#54595e"/>
          <path d="M2546 770h9M2546 776h9M2546 782h9M2546 788h9M2546 794h9M2548 800h6" stroke="#3fd85a" stroke-width="1"/>
        </svg>
      </div>

      <div class="dockhead curvehead">
        <span class="docktitle curvetitle">曲线图</span>
        <span class="dockctl curvectl">
          <svg width="15" height="16" viewBox="0 0 15 16"><path d="M0 1l7 7-7 7zM8 1l7 7-7 7z" fill="#4d5d72"/></svg>
          <svg width="13" height="14" viewBox="0 0 13 14"><path d="M1.500 1.500l10 11M11.500 1.500l-10 11" stroke="#4d5d72" stroke-width="3"/></svg>
        </span>
      </div>
      <div class="plot"></div>
    </section>
  </main>

  <div class="status"></div>

  <footer class="taskbar">
    <div class="weather">
      <div class="cloud">
        <svg width="35" height="24" viewBox="0 0 35 24"><path d="M7 24a7 7 0 0 1-1-14 11 11 0 0 1 21-2 8 8 0 0 1 1 16z" fill="url(#gc)"/></svg>
        <b class="wbadge">1</b>
      </div>
      <div class="wtext"><span>9°C</span><span class="wsub">多云</span></div>
    </div>
    <div class="dock">
      <div class="ti"><svg width="35" height="35"><use href="#k-win"/></svg></div>
      <div class="ti"><svg width="34" height="35"><use href="#k-search"/></svg></div>
      <div class="ti"><svg width="36" height="35"><use href="#k-task"/></svg></div>
      <div class="ti"><svg width="37" height="35"><use href="#k-folder"/></svg></div>
      <div class="ti"><svg width="36" height="36"><use href="#k-edge"/></svg></div>
      <div class="ti"><svg width="35" height="35"><use href="#k-store"/></svg></div>
      <div class="ti run"><svg width="34" height="36"><use href="#k-blue"/></svg></div>
      <div class="ti"><svg width="37" height="36"><use href="#k-xbox"/></svg></div>
      <div class="ti"><svg width="36" height="36"><use href="#k-cube"/></svg></div>
      <div class="ti run"><svg width="33" height="36"><use href="#k-ie"/></svg></div>
      <div class="ti run"><svg width="37" height="32"><use href="#k-wps"/></svg></div>
      <div class="ti run"><svg width="35" height="36"><use href="#k-swirl"/></svg></div>
      <div class="ti cur"><svg width="36" height="36"><use href="#logo"/></svg></div>
    </div>
    <div class="tray">
      <svg width="18" height="10" viewBox="0 0 18 10"><path d="M1 9.500 9 1l8 8.500" fill="none" stroke="#222" stroke-width="1.200"/></svg>
      <svg class="ml16" width="22" height="23"><use href="#y-shield"/></svg>
      <svg class="ml13" width="24" height="24"><use href="#y-sync"/></svg>
      <span class="ime ml18">英</span>
      <svg class="ml26" width="24" height="18"><use href="#y-wifi"/></svg>
      <svg class="ml12" width="24" height="18"><use href="#y-sound"/></svg>
      <svg class="ml12" width="24" height="14"><use href="#y-batt"/></svg>
      <div class="clock ml22"><span>10:58</span><span>2022/11/14</span></div>
      <b class="nbadge ml18">1</b>
    </div>
  </footer>
</div>
</body>
</html>
```

FILE: styles.css
```css
* { box-sizing: border-box; }
html, body { margin: 0; padding: 0; }
body {
  width: 2560px;
  height: 1600px;
  overflow: hidden;
  font-family: "Open Sans", "Noto Sans CJK SC", sans-serif;
  font-size: 18px;
  color: #222;
  background: #edeef0;
}
i { display: block; font-style: normal; }
svg { display: block; flex: none; }
.defs { position: absolute; }

.ml2 { margin-left: 2px; } .ml4 { margin-left: 4px; } .ml5 { margin-left: 5px; }
.ml6 { margin-left: 6px; } .ml7 { margin-left: 7px; } .ml8 { margin-left: 8px; }
.ml9 { margin-left: 9px; } .ml10 { margin-left: 10px; } .ml11 { margin-left: 11px; }
.ml12 { margin-left: 12px; } .ml13 { margin-left: 13px; } .ml14 { margin-left: 14px; }
.ml15 { margin-left: 15px; } .ml16 { margin-left: 16px; } .ml17 { margin-left: 17px; }
.ml18 { margin-left: 18px; } .ml19 { margin-left: 19px; } .ml21 { margin-left: 21px; }
.ml22 { margin-left: 22px; } .ml26 { margin-left: 26px; }

.app { display: flex; flex-direction: column; height: 1600px; }

/* title bar */
.titlebar { display: flex; height: 43px; background: #edeef0; flex: none; }
.qat { display: flex; align-items: center; width: 776px; }
.dd { width: 0; height: 0; border: 4px solid transparent; border-top: 6px solid #a4a9b0; border-bottom: 0; position: relative; }
.dd-line { border-top-color: #6a7280; }
.dd-line::before { content: ""; position: absolute; left: -4px; top: -9px; width: 8px; height: 2px; background: #6a7280; }
.qsep { width: 1px; height: 24px; background: #cfd3d8; }
.ctx {
  width: 122px;
  background: #f3f6f9;
  border-top: 5px solid #7fb3c1;
  color: #6a93a6;
  text-align: center;
  line-height: 36px;
}
.wintitle { flex: 1; text-align: center; line-height: 43px; padding-right: 616px; color: #333; }
.winbtns { display: flex; gap: 55px; width: 220px; padding: 13px 0 0 35px; }

/* menu */
.menubar { display: flex; height: 38px; background: #fff; border-bottom: 1px solid #cdd0d3; flex: none; line-height: 39px; position: relative; }
.filetab { width: 88px; background: #2b579a; color: #fff; text-align: center; }
.tab { padding: 0 17px; color: #222; }
.tab.active { color: #2b579a; border: 1px solid #c8cbce; border-bottom: 0; height: 38px; background: #fff; padding: 0 16px; }
.devtab { background: #f3f6f9; width: 122px; padding: 0; text-align: center; }
.collapse { margin: 13px 7px 0 auto; }

/* ribbon */
.ribbon {
  display: flex;
  height: 115px;
  flex: none;
  padding: 3px 0;
  background: #f9f9f9;
  border: 1px solid #d2d4d6;
  border-width: 0 2px 2px;
}
.rg { display: flex; border-right: 1px solid #bfc2c6; }
.rg1 { width: 121px; justify-content: center; }
.rg2 { width: 251px; padding-left: 13px; }
.rg3 { width: 101px; justify-content: center; }
.rbtn { display: flex; flex-direction: column; align-items: center; padding-top: 10px; }
.rbtn span { margin-top: 10px; line-height: 24px; white-space: nowrap; }
.rb-w54 { width: 54px; }
.rb-w43 { width: 43px; }
.rb-w45 { width: 45px; }
.dd-rb { margin-top: 9px; border-top-color: #6d7680; }

/* main */
.main { display: flex; flex: 1; min-height: 0; }
.left { width: 777px; display: flex; flex-direction: column; padding-right: 9px; flex: none; }
.right { flex: 1; display: flex; flex-direction: column; min-width: 0; }

.dockhead { display: flex; align-items: center; justify-content: space-between; height: 36px; padding-right: 11px; flex: none; }
.docktitle { color: #7d8b9c; padding-left: 5px; }
.lefttitle { margin-top: -2px; }
.dockctl { display: flex; gap: 20px; align-items: center; }

.subtabs { display: flex; height: 24px; line-height: 24px; flex: none; position: relative; z-index: 1; }
.st { padding: 0 5px 0 6px; }
.st.on { background: #fff; border: 1px solid #b4b7ba; border-bottom: 0; border-radius: 2px 2px 0 0; padding: 0 4px; height: 25px; }

.tree {
  position: relative;
  height: 570px;
  flex: none;
  background: #fff;
  border: 1px solid #b4b7ba;
  border-radius: 2px;
  padding-top: 7px;
  margin-top: -1px;
}
.guides { position: absolute; left: -1px; top: -1px; pointer-events: none; }
.row { display: flex; align-items: center; height: 26px; line-height: 26px; white-space: nowrap; position: relative; }
.row svg { margin: 0 7px 0 12px; }
.l0 { padding-left: 8px; }
.l1 { padding-left: 38px; }
.l2 { padding-left: 68px; }
.l3 { padding-left: 98px; }
.dim { color: #8e9398; }
.exp { width: 14px; height: 14px; border: 1px solid #a5abb2; border-radius: 50%; background: #f6f7f8; position: relative; flex: none; }
.exp.none { visibility: hidden; }
.exp.minus::before, .exp.plus::before { content: ""; position: absolute; left: 3px; top: 5px; width: 6px; height: 2px; background: #555d68; }
.exp.plus::after { content: ""; position: absolute; left: 5px; top: 3px; width: 2px; height: 6px; background: #555d68; }
.xt { font: italic 700 15px "Liberation Serif", serif; fill: #25406e; }
.xt-p { font: italic 400 10px "Liberation Sans", sans-serif; }
.xt-s { font: italic 400 9px "Liberation Serif", serif; fill: #25406e; }
.app-t { font: 700 17px "Liberation Sans", sans-serif; fill: #5d6f88; text-anchor: middle; }
.ax-t { font: 400 8px "Liberation Sans", sans-serif; fill: #333; }

/* properties */
.props {
  margin-top: 7px;
  flex: 1;
  min-height: 0;
  background: #edeef0;
  border: 1px solid #b4b7ba;
  border-width: 0 1px 1px 0;
  border-radius: 2px;
}
.phead { display: flex; height: 26px; line-height: 27px; background: linear-gradient(#b4b8bb, #a9adb0); border-bottom: 1px solid #7e8388; }
.ph-k { width: 151px; padding-left: 12px; border-right: 1px solid #8f9499; }
.ph-v { padding-left: 10px; }
.pgroup { height: 29px; line-height: 29px; background: #bacfe2; border-bottom: 2px solid #d4dde6; padding-left: 34px; font-weight: 700; color: #66768c; }
.pr { display: flex; height: 29px; line-height: 29px; background: #fff; }
.pr.alt { background: #edeef0; }
.pi {
  width: 31px;
  flex: none;
  background:
    linear-gradient(#d0d3d6, #d0d3d6) 15px 0 / 2px 100% no-repeat,
    linear-gradient(#d0d3d6, #d0d3d6) 15px 14px / 16px 2px no-repeat;
}
.pi-end { background:
    linear-gradient(#d0d3d6, #d0d3d6) 15px 0 / 2px 15px no-repeat,
    linear-gradient(#d0d3d6, #d0d3d6) 15px 14px / 16px 2px no-repeat; }
.pk { width: 120px; padding-left: 3px; border-right: 1px solid #cfd2d5; border-bottom: 2px solid #cfd2d5; flex: none; }
.pv { flex: 1; padding-left: 3px; border-bottom: 2px solid #cfd2d5; }

.bottabs { display: flex; height: 26px; background: #fff; padding-left: 1px; line-height: 28px; flex: none; align-items: flex-end; }
.bt { padding: 0 3px; height: 25px; width: 43px; }
.bt.on { background: #adb1b4; border: 1px solid #85898d; border-bottom: 0; width: 47px; margin-left: 2px; padding: 0 4px; line-height: 28px; }

/* viewer toolbar */
.toolbar { display: flex; align-items: center; height: 43px; background: #fff; flex: none; }
.tsep { width: 1px; height: 36px; background: #c5c9ce; }
.tdash { width: 1px; height: 36px; background: repeating-linear-gradient(#7d848c 0 2px, transparent 2px 5px); }
.tlabel { width: 41px; white-space: nowrap; }
.combo { display: flex; width: 79px; height: 27px; border: 1px solid #4a90d9; border-radius: 2px; line-height: 25px; }
.combo-val { flex: 1; padding-left: 6px; }
.combo-btn { width: 19px; background: #cfe3f8; display: flex; align-items: center; justify-content: center; }
.slider { width: 82px; height: 6px; background: #eceef0; border: 1px solid #c4c8cc; position: relative; margin-top: -8px; }
.thumb { position: absolute; right: -1px; top: -3px; width: 13px; height: 15px; background: #f2f3f5; border: 1px solid #c4c8cc; }
.spin { display: flex; align-items: center; justify-content: space-between; width: 50px; height: 27px; border: 1px solid #b8bcc2; border-radius: 3px; padding: 0 4px 0 3px; }
.select { display: flex; align-items: center; justify-content: space-between; width: 80px; height: 27px; border: 1px solid #b8bcc2; border-radius: 3px; padding: 0 8px 0 6px; }

/* viewport */
.viewport { position: relative; flex: 1; min-height: 0; background: linear-gradient(#b9cee4, #e7ebee); overflow: hidden; }
.scene { position: absolute; left: 0; top: 0; }
.ax { font: 700 13px "Liberation Sans", sans-serif; }
.ax-z { fill: #0000ff; } .ax-y { fill: #00e000; } .ax-x { fill: #ff0000; }
.cb-u { font: 700 15px "DejaVu Sans", sans-serif; fill: #111; text-anchor: middle; }
.cb-l { font: 400 11px "DejaVu Sans", sans-serif; fill: #111; }
.vp-cap { font: 400 15px "Noto Sans CJK SC", sans-serif; fill: #222; }

.curvehead { height: 43px; padding: 3px 11px 0 0; }
.curvetitle { color: #6f86a6; }
.curvectl { gap: 21px; }
.plot { height: 192px; background: #a0a0a0; flex: none; }

/* status */
.status { height: 37px; flex: none; background: #edeef0; border: 1px solid #b4b7ba; border-right: 0; }

/* taskbar */
.taskbar {
  display: grid;
  grid-template-columns: 1fr auto 1fr;
  height: 72px;
  flex: none;
  background: linear-gradient(90deg, #d5dce7 0, #d5dce7 30%, #e6ecf4 36%, #d6dde7 48%, #d6dbe3 70%, #d9dbe0 100%);
}
.weather { display: flex; align-items: center; padding-left: 31px; }
.cloud { position: relative; width: 35px; margin-top: 2px; }
.wbadge {
  position: absolute; left: 16px; top: -15px;
  width: 23px; height: 24px; border-radius: 50%;
  background: #c42b1c; color: #fff;
  font: 400 15px/24px "Open Sans", sans-serif; text-align: center;
}
.wtext { display: flex; flex-direction: column; margin: 4px 0 0 11px; line-height: 26px; font-size: 17px; }
.wsub { color: #5a5f66; font-size: 18px; }
.dock { display: flex; padding-left: 1px; }
.ti { width: 66px; height: 72px; display: flex; flex-direction: column; align-items: center; padding-top: 20px; position: relative; }
.run::after { content: ""; width: 8px; height: 8px; border-radius: 50%; background: #6d737b; position: absolute; top: 59px; }
.ti.cur { width: 60px; height: 60px; margin: 7px 3px 5px; padding-top: 13px; background: #fde3e3; border-radius: 6px; }
.ti.cur::after { content: ""; width: 24px; height: 5px; border-radius: 3px; background: #c42b1c; position: absolute; top: 53px; }
.tray { display: flex; align-items: center; justify-content: flex-end; padding-right: 29px; }
.ime { font-size: 22px; line-height: 30px; width: 22px; }
.clock { display: flex; flex-direction: column; align-items: flex-end; width: 84px; font-size: 16px; line-height: 23px; white-space: nowrap; color: #222; }
.nbadge { width: 24px; height: 24px; border-radius: 50%; background: #0078d4; color: #fff; font: 400 15px/24px "Open Sans", sans-serif; text-align: center; }
```
